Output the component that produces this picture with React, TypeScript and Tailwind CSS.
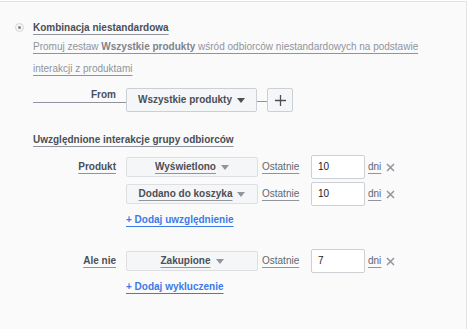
import React from "react";

const Caret = ({ color = "#90949c" }: { color?: string }) => (
  <svg width="8" height="5" viewBox="0 0 8 5" className="ml-[5px] shrink-0">
    <path d="M0 0 L8 0 L4 5 Z" fill={color} />
  </svg>
);

const XIcon = () => (
  <svg width="9" height="9" viewBox="0 0 9 9" className="shrink-0">
    <path d="M1 1 L8 8 M8 1 L1 8" stroke="#90949c" strokeWidth="1.5" />
  </svg>
);

const Dropdown = ({ label }: { label: string }) => (
  <div className="flex h-[20px] w-[132px] items-center justify-center rounded-[2px] border border-[#dddfe2] bg-[#f5f6f7]">
    <span className="font-bold text-[#4b4f56] underline decoration-[#90949c] underline-offset-[3px]">{label}</span>
    <Caret />
  </div>
);

const Row = ({ label, item, value }: { label?: string; item: string; value: string }) => (
  <div className="flex h-[24px] items-center">
    <div className="flex w-[83px] justify-end">
      {label && (
        <span className="font-bold text-[#4b4f56] underline decoration-[#90949c] underline-offset-[3px]">{label}</span>
      )}
    </div>
    <div className="ml-[10px]">
      <Dropdown label={item} />
    </div>
    <div className="ml-[4px] w-[49px] text-[#606770] underline decoration-[#90949c] underline-offset-[3px]">Ostatnie</div>
    <div className="flex h-[24px] w-[54px] items-center rounded-[2px] border border-[#ccd0d5] bg-white pl-[6px] text-[#1d2129]">
      {value}
    </div>
    <span className="ml-[3px] text-[#606770] underline decoration-[#90949c] underline-offset-[3px]">dni</span>
    <span className="ml-[5px] flex items-center">
      <XIcon />
    </span>
  </div>
);

const Link = ({ text }: { text: string }) => (
  <div className="flex h-[16px] items-center pl-[93px]">
    <span className="font-bold text-[#3d7ae8] underline decoration-[#3d7ae8] underline-offset-[3px]">{text}</span>
  </div>
);

export default function App() {
  return (
    <div
      className="h-[335px] w-[467px] bg-white pt-px text-[10px] leading-[14px]"
      style={{ fontFamily: '"Liberation Sans", Arial, sans-serif' }}
    >
      <div className="h-[328px] w-[467px] border-t border-r border-[#e3e3e3] bg-[#fafafa]">
        <div className="mt-[17px] flex h-[17px] items-center">
          <div className="ml-[15px] flex h-[9px] w-[9px] items-center justify-center rounded-full border border-[#d4d6da] bg-[#f5f6f7]">
            <div className="h-[3px] w-[3px] rounded-full bg-[#7f838a]" />
          </div>
          <span className="ml-[9px] font-bold text-[#4b4f56] underline decoration-[#90949c] underline-offset-[3px]">
            Kombinacja niestandardowa
          </span>
        </div>
        <div className="ml-[33px] w-[400px] leading-[22px] text-[#90949c]">
          <span className="underline decoration-[#90949c] underline-offset-[3px]">
            Promuj zestaw <span className="font-bold text-[#7f838a]">Wszystkie produkty</span> wśród odbiorców niestandardowych na podstawie interakcji z produktami
          </span>
        </div>
        <div className="ml-[33px] mt-[8px] flex h-[24px] items-start">
          <div className="flex h-[15px] w-[93px] items-start justify-end border-b border-[#90949c] pr-[10px]">
            <span className="font-bold text-[#4b4f56]">From</span>
          </div>
          <div className="flex h-[24px] w-[131px] items-center justify-center rounded-[2px] border border-[#ccd0d5] bg-[#f5f6f7]">
            <span className="font-bold text-[#4b4f56]">Wszystkie produkty</span>
            <Caret color="#4b4f56" />
          </div>
          <div className="mt-[13px] h-px w-[10px] bg-[#90949c]" />
          <div className="flex h-[24px] w-[26px] items-center justify-center rounded-[2px] border border-[#ccd0d5] bg-[#f5f6f7]">
            <svg width="11" height="11" viewBox="0 0 11 11">
              <path d="M5.5 0 V11 M0 5.5 H11" stroke="#4b4f56" strokeWidth="1.3" />
            </svg>
          </div>
        </div>
        <div className="ml-[33px] mt-[20px] flex h-[16px] items-center">
          <span className="font-bold text-[#4b4f56] underline decoration-[#90949c] underline-offset-[3px]">
            Uwzględnione interakcje grupy odbiorców
          </span>
        </div>
        <div className="ml-[33px] mt-[7px]">
          <Row label="Produkt" item="Wyświetlono" value="10" />
          <div className="mt-[3px]">
            <Row item="Dodano do koszyka" value="10" />
          </div>
        </div>
        <div className="ml-[33px] mt-[6px]">
          <Link text="+ Dodaj uwzględnienie" />
        </div>
        <div className="ml-[33px] mt-[21px]">
          <Row label="Ale nie" item="Zakupione" value="7" />
        </div>
        <div className="ml-[33px] mt-[6px]">
          <Link text="+ Dodaj wykluczenie" />
        </div>
      </div>
    </div>
  );
}
